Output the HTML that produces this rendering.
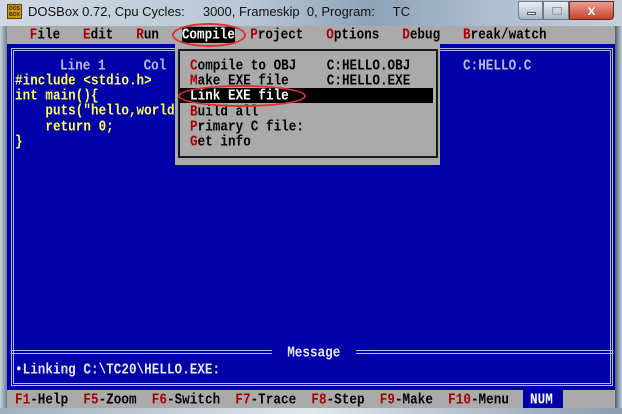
<!DOCTYPE html>
<html><head><meta charset="utf-8"><style>
*{margin:0;padding:0;box-sizing:border-box}
body{width:622px;height:414px;overflow:hidden;background:#6f7f90;position:relative;font-family:"Liberation Mono",monospace;}
.t{position:absolute;font-size:12.6px;font-weight:bold;white-space:pre;line-height:13.22px;letter-spacing:0.04px;transform:scaleY(1.15);transform-origin:0 0}
.r{color:#a80000}.k{color:#000}.y{color:#ffff55}.w{color:#fff}.l{color:#b8bce8}
.abs{position:absolute}
</style></head><body>
<div class="abs" style="left:0;top:0;width:622px;height:26px;background:linear-gradient(90deg,#cfd8e2 0%,#b9c7d6 40%,#8ea3b8 60%,#aebfd0 80%,#c5d0db 100%)"></div>
<div class="abs" style="left:0;top:26px;width:7px;height:388px;background:linear-gradient(90deg,#c9d3dd,#6e8090)"></div>
<div class="abs" style="left:615px;top:26px;width:7px;height:388px;background:linear-gradient(90deg,#4d5d70,#c5d0db)"></div>
<div class="abs" style="left:0;top:408px;width:622px;height:6px;background:linear-gradient(90deg,#9fb0c0,#e0e8ee,#8a9cb0)"></div>
<div class="abs" style="left:7px;top:4px;width:15px;height:15px;background:#c89a1a;border:1px solid #5a3d00;font:bold 5px 'Liberation Sans',sans-serif;color:#3a1e00;line-height:6px;text-align:center;padding-top:1px">DOS<br>BOX</div>
<div class="abs" style="left:28px;top:4px;font:13px 'Liberation Sans',sans-serif;color:#111;white-space:pre">DOSBox 0.72, Cpu Cycles:     3000, Frameskip  0, Program:     TC</div>
<div class="abs" style="left:518px;top:1px;width:25px;height:19px;border:1px solid #6b7a8c;border-radius:0 0 0 4px;background:linear-gradient(#e8eef4,#a9b8c8)"><div class="abs" style="left:8px;top:10px;width:9px;height:3px;background:#fff;border:1px solid #555"></div></div>
<div class="abs" style="left:543px;top:1px;width:26px;height:19px;border:1px solid #6b7a8c;background:linear-gradient(#e8eef4,#a9b8c8)"><div class="abs" style="left:8px;top:5px;width:10px;height:8px;border:1px solid #999"></div></div>
<div class="abs" style="left:569px;top:1px;width:45px;height:19px;border:1px solid #6b2a20;border-radius:0 0 4px 0;background:linear-gradient(#e9a090,#c8402c);color:#fff;font:bold 14px 'Liberation Sans',sans-serif;text-align:center;line-height:17px">x</div>

<div class="abs" style="left:7px;top:26px;width:608px;height:382px;background:#0000a8"></div>
<div class="abs" style="left:7px;top:26px;width:608px;height:18px;background:#aaaaaa"></div>
<div class="t" style="left:7px;top:28px"><span class="k">   </span><span class="r">F</span><span class="k">ile   </span><span class="r">E</span><span class="k">dit   </span><span class="r">R</span><span class="k">un   </span><span style="background:#000;color:#fff">Compile</span><span class="k">  </span><span class="r">P</span><span class="k">roject   </span><span class="r">O</span><span class="k">ptions   </span><span class="r">D</span><span class="k">ebug   </span><span class="r">B</span><span class="k">reak/watch</span></div>

<div class="abs" style="left:11px;top:48px;width:602px;height:338px;border:3px double #b8bce8"></div>
<div class="abs" style="left:11px;top:350px;width:602px;height:4px;border-top:1px solid #b8bce8;border-bottom:1px solid #b8bce8"></div>
<div class="t w" style="left:272px;top:346px;background:#0000a8;color:#e8e8ff">  Message  </div>

<div class="t l" style="left:60px;top:59px">Line 1     Col</div>
<div class="t l" style="left:463px;top:59px">C:HELLO.C</div>
<div class="t y" style="left:15px;top:74px">#include &lt;stdio.h&gt;
int main(){
    puts("hello,world
    return 0;
}</div>

<div class="abs" style="left:175px;top:44px;width:265px;height:121px;background:#aaaaaa"></div>
<div class="abs" style="left:178px;top:49px;width:260px;height:109px;border:2px solid #1a1a1a"></div>
<div class="abs" style="left:180px;top:88px;width:253px;height:15px;background:#000"></div>
<div class="t k" style="left:190px;top:59px"><span class="r">C</span>ompile to OBJ    C:HELLO.OBJ
<span class="r">M</span>ake EXE file     C:HELLO.EXE
<span class="w">Link EXE file</span>
<span class="r">B</span>uild all
<span class="r">P</span>rimary C file:
<span class="r">G</span>et info</div>

<div class="t w" style="left:15px;top:363px;color:#e8e8ff">•Linking C:\TC20\HELLO.EXE:</div>

<div class="abs" style="left:7px;top:390px;width:608px;height:18px;background:#aaaaaa"></div>
<div class="t k" style="left:15px;top:393px"><span class="r">F1</span>-Help  <span class="r">F5</span>-Zoom  <span class="r">F6</span>-Switch  <span class="r">F7</span>-Trace  <span class="r">F8</span>-Step  <span class="r">F9</span>-Make  <span class="r">F10</span>-Menu</div>
<div class="abs" style="left:523px;top:390px;width:40px;height:18px;background:#0000a8"></div>
<div class="t w" style="left:530px;top:393px">NUM</div>

<div class="abs" style="left:172px;top:23px;width:74px;height:24px;border:2px solid #e03030;border-radius:50%"></div>
<div class="abs" style="left:178px;top:85px;width:128px;height:22px;border:2px solid #e03030;border-radius:50%"></div>
</body></html>
